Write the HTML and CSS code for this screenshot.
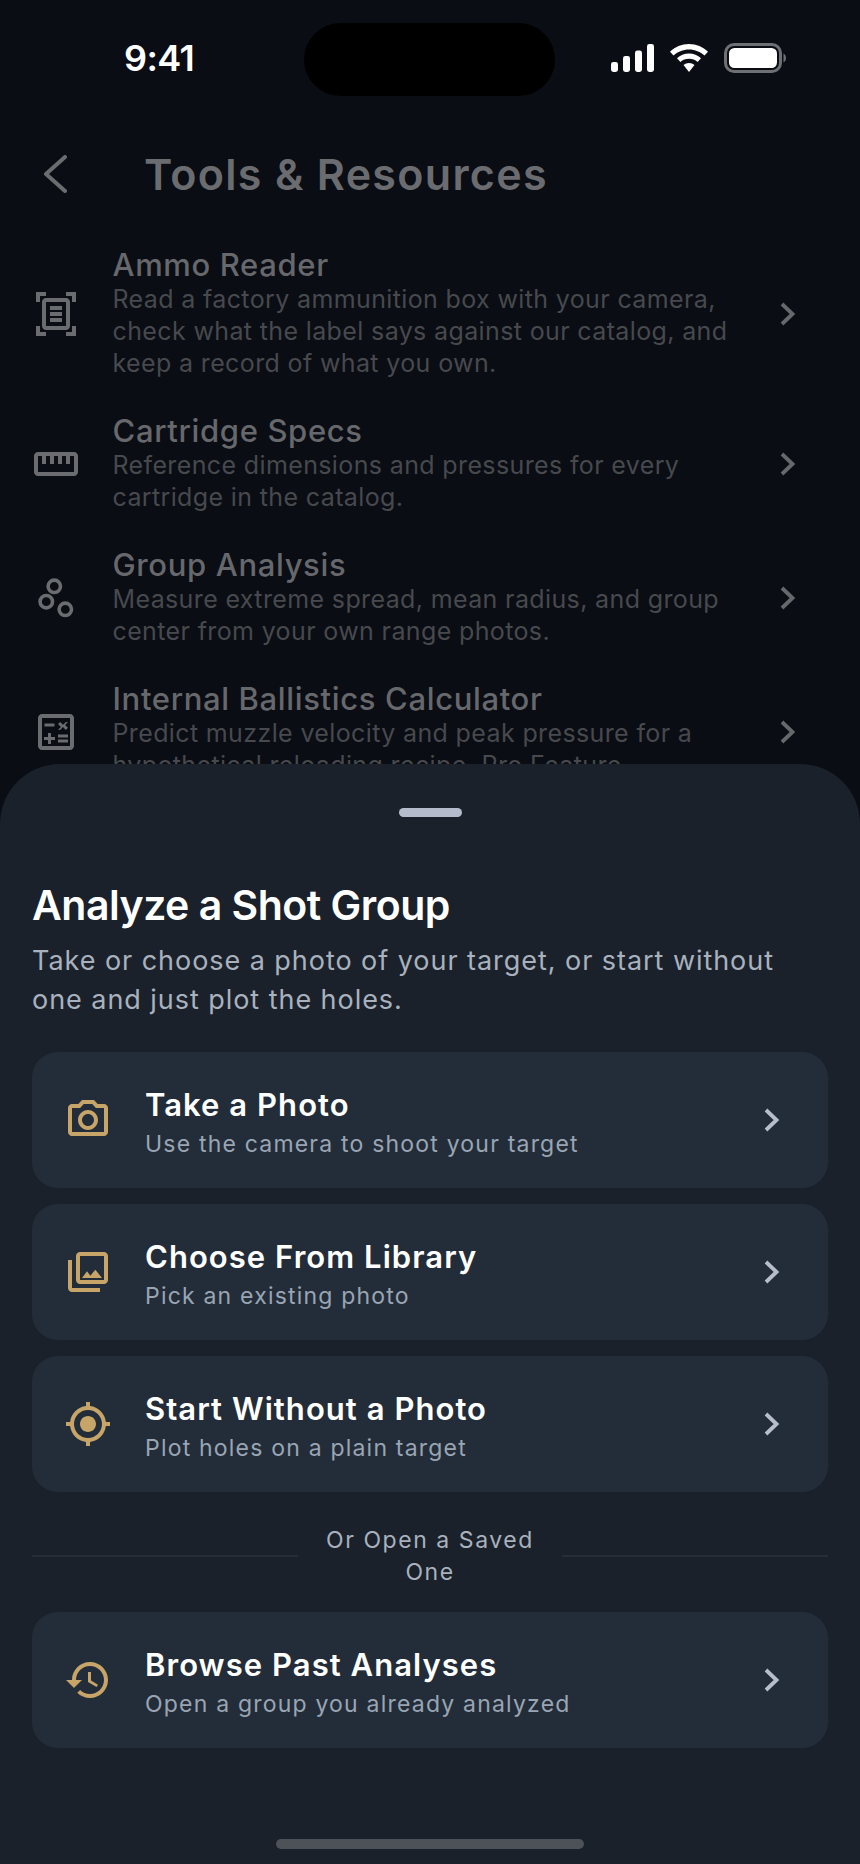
FILE: index.html
```html
<!DOCTYPE html>
<html lang="en">

<head>
    <meta charset="UTF-8">
    <title>Analyze a Shot Group</title>
    <link rel="stylesheet" href="styles.css">
</head>
<body>
<div class="phone">
    <div class="statusbar">
        <span class="time">9:41</span>
        <div class="island"></div>
        <div class="status-icons">
            <svg width="44" height="30" viewBox="0 0 44 30"><rect x="1" y="19" width="7" height="10" rx="2.4"/><rect x="13" y="13" width="7" height="16" rx="2.4"/><rect x="25" y="7.500" width="7" height="21.500" rx="2.400"/><rect x="37" y="1" width="7" height="28" rx="2.400"/></svg>
            <svg width="40" height="30" viewBox="0 0 40 30"><path d="M20 1C12.500 1 6 4 1 8.700L4.500 12.500C8.600 8.700 14 6.400 20 6.400S31.400 8.700 35.500 12.500L39 8.700C34 4 27.500 1 20 1Z"/><path d="M20 10.500C15.400 10.500 11.200 12.300 8 15.200L11.400 18.900C13.700 16.900 16.700 15.700 20 15.700S26.300 16.900 28.600 18.900L32 15.200C28.800 12.300 24.600 10.500 20 10.500Z"/><path d="M20 20C17.900 20 16 20.700 14.500 22L20 29L25.500 22C24 20.700 22.100 20 20 20Z"/></svg>
            <svg width="62" height="30" viewBox="0 0 62 30"><rect x="1.500" y="1.500" width="55" height="27" rx="8.500" fill="none" stroke="#6e7074" stroke-width="3"/><rect x="5" y="5" width="48" height="20" rx="5.500"/><path d="M59.500 10.500C61 11 62 13 62 15S61 19 59.500 19.500Z" fill="#6e7074"/></svg>
        </div>
    </div>

    <div class="topbar">
        <svg class="back" width="24" height="38" viewBox="0 0 24 38"><polyline points="22,2 3,19 22,36" fill="none" stroke="#6b6c6f" stroke-width="4" stroke-linecap="round" stroke-linejoin="round"/></svg>
        <h1>Tools &amp; Resources</h1>
    </div>

    <div class="list">
        <div class="row">
            <svg class="row-icon" viewBox="0 0 24 24"><path d="M7 3H4v3H2V1h5v2zm15 3V1h-5v2h3v3h2zM7 21H4v-3H2v5h5v-2zm13-3v3h-3v2h5v-5h-2zM17 6H7v12h10V6zm2 12c0 1.100-.9 2-2 2H7c-1.100 0-2-.9-2-2V6c0-1.100.9-2 2-2h10c1.100 0 2 .9 2 2v12zM15 8H9v2h6V8zm0 3H9v2h6v-2zm0 3H9v2h6v-2z"/></svg>
            <div class="row-text">
                <div class="row-title">Ammo Reader</div>
                <p>Read a factory ammunition box with your camera, check what the label says against our catalog, and keep a record of what you own.</p>
            </div>
            <svg class="row-chevron" viewBox="0 0 16 24"><polyline points="2,2 12.500,12 2,22"/></svg>
        </div>
        <div class="row">
            <svg class="row-icon" viewBox="0 0 24 24"><path d="M21 6H3c-1.100 0-2 .9-2 2v8c0 1.100.9 2 2 2h18c1.100 0 2-.9 2-2V8c0-1.100-.9-2-2-2zm0 10H3V8h2v4h2V8h2v4h2V8h2v4h2V8h2v4h2V8h2v8z"/></svg>
            <div class="row-text">
                <div class="row-title">Cartridge Specs</div>
                <p>Reference dimensions and pressures for every cartridge in the catalog.</p>
            </div>
            <svg class="row-chevron" viewBox="0 0 16 24"><polyline points="2,2 12.500,12 2,22"/></svg>
        </div>
        <div class="row">
            <svg class="row-icon" viewBox="0 0 48 48"><g fill="none" stroke="#6b6c6f" stroke-width="3.600"><circle cx="22.300" cy="12.300" r="6.200"/><circle cx="14.300" cy="27.700" r="6.200"/><circle cx="33.300" cy="35.300" r="6.200"/></g></svg>
            <div class="row-text">
                <div class="row-title">Group Analysis</div>
                <p>Measure extreme spread, mean radius, and group center from your own range photos.</p>
            </div>
            <svg class="row-chevron" viewBox="0 0 16 24"><polyline points="2,2 12.500,12 2,22"/></svg>
        </div>
        <div class="row">
            <svg class="row-icon" viewBox="0 0 24 24"><path d="M19 3H5c-1.100 0-2 .9-2 2v14c0 1.100.9 2 2 2h14c1.100 0 2-.9 2-2V5c0-1.100-.9-2-2-2zm0 16H5V5h14v14z"/><path d="M6.250 7.720h5v1.500h-5zM13 15.750h5v1.500h-5zM13 13.250h5v1.500h-5zM8 18h1.500v-2h2v-1.500h-2v-2H8v2H6V16h2zM14.090 10.950l1.410-1.410 1.410 1.410 1.060-1.060-1.410-1.420 1.410-1.410L16.970 7 15.500 8.410 14.090 7l-1.060 1.060 1.410 1.410-1.410 1.420z"/></svg>
            <div class="row-text">
                <div class="row-title">Internal Ballistics Calculator</div>
                <p>Predict muzzle velocity and peak pressure for a hypothetical reloading recipe. Pro Feature.</p>
            </div>
            <svg class="row-chevron" viewBox="0 0 16 24"><polyline points="2,2 12.500,12 2,22"/></svg>
        </div>
    </div>

    <div class="sheet">
        <div class="handle"></div>
        <h2>Analyze a Shot Group</h2>
        <p class="lead">Take or choose a photo of your target, or start without one and just plot the holes.</p>

        <div class="cards">
            <div class="card">
                <svg class="card-icon" viewBox="0 0 24 24"><path d="M14.120 4l1.830 2H20v12H4V6h4.050l1.830-2h4.240M15 2H9L7.170 4H4c-1.100 0-2 .9-2 2v12c0 1.100.9 2 2 2h16c1.100 0 2-.9 2-2V6c0-1.100-.9-2-2-2h-3.170L15 2zm-3 7c1.650 0 3 1.350 3 3s-1.350 3-3 3-3-1.350-3-3 1.350-3 3-3m0-2c-2.760 0-5 2.240-5 5s2.240 5 5 5 5-2.240 5-5-2.240-5-5-5z"/></svg>
                <div class="card-text">
                    <div class="card-title">Take a Photo</div>
                    <div class="card-sub">Use the camera to shoot your target</div>
                </div>
                <svg class="card-chevron" viewBox="0 0 16 24"><polyline points="2,2 12.500,12 2,22"/></svg>
            </div>
            <div class="card">
                <svg class="card-icon" viewBox="0 0 24 24"><path d="M20 4v12H8V4h12m0-2H8c-1.100 0-2 .9-2 2v12c0 1.100.9 2 2 2h12c1.100 0 2-.9 2-2V4c0-1.100-.9-2-2-2zm-8.500 9.670l1.690 2.260 2.480-3.100L19 15H9zM2 6v14c0 1.100.9 2 2 2h14v-2H4V6H2z"/></svg>
                <div class="card-text">
                    <div class="card-title">Choose From Library</div>
                    <div class="card-sub">Pick an existing photo</div>
                </div>
                <svg class="card-chevron" viewBox="0 0 16 24"><polyline points="2,2 12.500,12 2,22"/></svg>
            </div>
            <div class="card">
                <svg class="card-icon" viewBox="0 0 24 24"><path d="M12 8c-2.210 0-4 1.790-4 4s1.790 4 4 4 4-1.790 4-4-1.790-4-4-4zm8.940 3c-.46-4.170-3.770-7.480-7.940-7.940V1h-2v2.060C6.830 3.520 3.520 6.830 3.060 11H1v2h2.060c.46 4.170 3.770 7.480 7.940 7.940V23h2v-2.060c4.170-.46 7.480-3.770 7.940-7.940H23v-2h-2.060zM12 19c-3.870 0-7-3.130-7-7s3.130-7 7-7 7 3.130 7 7-3.130 7-7 7z"/></svg>
                <div class="card-text">
                    <div class="card-title">Start Without a Photo</div>
                    <div class="card-sub">Plot holes on a plain target</div>
                </div>
                <svg class="card-chevron" viewBox="0 0 16 24"><polyline points="2,2 12.500,12 2,22"/></svg>
            </div>
        </div>

        <div class="divider">
            <div class="divider-line"></div>
            <span>Or Open a Saved One</span>
            <div class="divider-line"></div>
        </div>

        <div class="card">
            <svg class="card-icon" viewBox="0 0 24 24"><path d="M13 3c-4.970 0-9 4.030-9 9H1l3.890 3.890.07.14L9 12H6c0-3.870 3.130-7 7-7s7 3.130 7 7-3.130 7-7 7c-1.930 0-3.680-.79-4.940-2.060l-1.420 1.420C8.270 19.990 10.510 21 13 21c4.970 0 9-4.030 9-9s-4.030-9-9-9zm-1 5v5l4.280 2.540.72-1.210-3.500-2.080V8H12z"/></svg>
            <div class="card-text">
                <div class="card-title">Browse Past Analyses</div>
                <div class="card-sub">Open a group you already analyzed</div>
            </div>
            <svg class="card-chevron" viewBox="0 0 16 24"><polyline points="2,2 12.500,12 2,22"/></svg>
        </div>

        <div class="homebar"></div>
    </div>
</div>
</body>

</html>
```

FILE: styles.css
```css
* {
    box-sizing: border-box;
}
body {
    margin: 0;
    background-color: #0a0d14;
    font-family: "Inter", "Noto Sans", sans-serif;
}
.phone {
    position: relative;
    width: 860px;
    height: 1864px;
    overflow: hidden;
    background-color: #0a0d14;
}

/* status bar */
.statusbar {
    display: flex;
    align-items: flex-start;
    justify-content: space-between;
    height: 96px;
    padding: 23px 74px 0 124px;
}
.time {
    width: 72px;
    margin-top: 17px;
    color: #fff;
    font-size: 36px;
    font-weight: 600;
    line-height: 36px;
    letter-spacing: -0.6px;
}
.island {
    width: 251px;
    height: 73px;
    margin-left: 53px;
    border-radius: 37px;
    background-color: #000;
}
.status-icons {
    display: flex;
    align-items: center;
    gap: 15px;
    margin-top: 20px;
    fill: #fff;
}

/* page behind the sheet */
.topbar {
    display: flex;
    align-items: center;
    height: 60px;
    margin-top: 48px;
    padding-left: 43px;
}
.back {
    margin-right: 77px;
}
.topbar h1 {
    margin: 0;
    color: #6b6c6f;
    font-size: 43px;
    font-weight: 600;
    line-height: 60px;
    letter-spacing: 1.3px;
}
.list {
    display: flex;
    flex-direction: column;
    gap: 35px;
    margin-top: 44px;
    padding: 0 64px 0 32px;
}
.row {
    display: flex;
    align-items: center;
    gap: 32.500px;
}
.row-icon {
    flex: none;
    width: 48px;
    height: 48px;
    fill: #6b6c6f;
}
.row-text {
    flex: 1;
}
.row-title {
    margin-bottom: 2px;
    color: #67686b;
    font-size: 31px;
    font-weight: 500;
    line-height: 33px;
    letter-spacing: 0.65px;
}
.row-text p {
    margin: 0;
    color: #47494d;
    font-size: 25px;
    line-height: 32px;
    letter-spacing: 0.37px;
}
.row-chevron {
    flex: none;
    width: 16px;
    height: 24px;
    fill: none;
    stroke: #67686b;
    stroke-width: 3.800;
}

/* bottom sheet */
.sheet {
    position: absolute;
    left: 0;
    right: 0;
    top: 764px;
    bottom: 0;
    padding: 44px 32px 0;
    border-radius: 60px 60px 0 0;
    background-color: #1a212b;
}
.handle {
    width: 63px;
    height: 9px;
    margin: 0 auto;
    border-radius: 5px;
    background-color: #b4bccc;
}
.sheet h2 {
    margin: 63px 0 0;
    color: #fff;
    font-size: 41px;
    font-weight: 600;
    line-height: 50px;
    letter-spacing: -0.5px;
}
.lead {
    margin: 11px 0 0;
    padding-right: 20px;
    color: #a9b1bd;
    font-size: 27px;
    line-height: 39px;
    letter-spacing: 0.95px;
}
.cards {
    display: flex;
    flex-direction: column;
    gap: 16px;
    margin-top: 33px;
}
.card {
    display: flex;
    align-items: center;
    height: 136px;
    padding: 0 32px;
    border-radius: 26px;
    background-color: #232d39;
}
.card-icon {
    flex: none;
    width: 48px;
    height: 48px;
    margin-right: 33px;
    fill: #c7a468;
}
.card-text {
    flex: 1;
    padding-top: 5px;
}
.card-title {
    color: #fff;
    font-size: 31px;
    font-weight: 600;
    line-height: 38px;
    letter-spacing: 1.05px;
}
.card-sub {
    margin-top: 5px;
    color: #9aa5b3;
    font-size: 23px;
    line-height: 30px;
    letter-spacing: 1.2px;
}
.card-chevron {
    flex: none;
    width: 16px;
    height: 24px;
    margin-right: 16px;
    fill: none;
    stroke: #b7bec9;
    stroke-width: 3.800;
}
.divider {
    display: flex;
    align-items: center;
    gap: 24px;
    margin: 32px 0 24px;
}
.divider-line {
    flex: 1;
    height: 2px;
    background-color: #252d39;
}
.divider span {
    flex: none;
    width: 216px;
    color: #a9b1bd;
    font-size: 23px;
    line-height: 32px;
    letter-spacing: 1.55px;
    text-align: center;
}
.homebar {
    position: absolute;
    left: 276px;
    bottom: 15px;
    width: 308px;
    height: 10px;
    border-radius: 5px;
    background-color: #4d5158;
}
```
